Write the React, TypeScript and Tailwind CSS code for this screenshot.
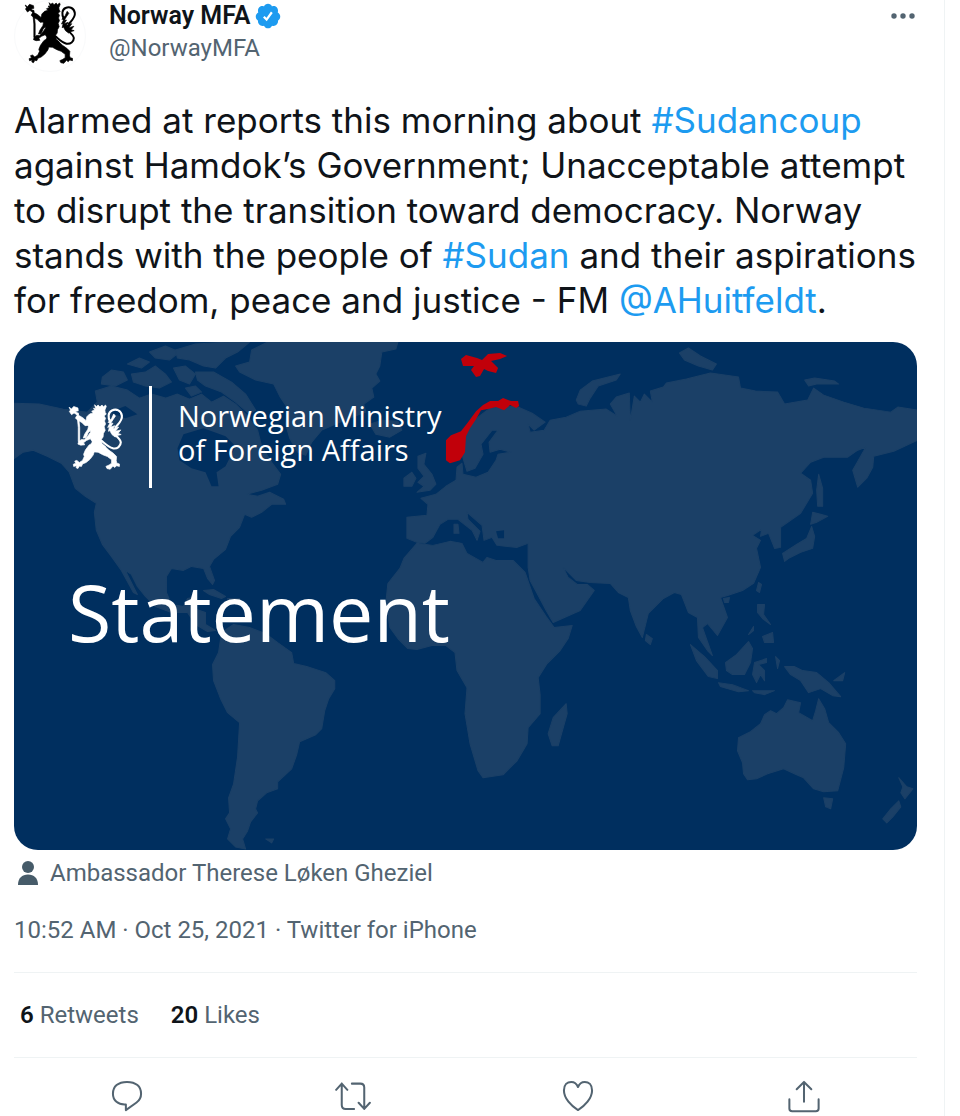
import type { ReactNode } from "react";

const LAND = [
  // North America
  "M14 403L40 404L64 409L88 412L98 402L96 391L112 386L128 390L140 398L152 394L166 398L178 394L190 399L202 394L212 402L224 396L236 404L248 416L258 430L262 446L272 462L281 474L278 484L262 490L247 494L258 496L270 492L284 499L286 504L272 504L262 512L252 517L245 514L240 527L231 536L226 549L214 559L210 566L215 580L213 584L208 578L204 568L192 566L184 570L172 568L167 576L167 592L172 604L184 606L188 598L197 596L194 608L206 612L206 624L216 630L208 631L196 624L188 612L172 612L156 606L146 596L138 586L132 574L126 570L138 594L134 592L122 570L112 556L103 544L97 530L95 512L97 503L86 496L76 488L70 472L62 463L48 456L34 450L24 452L14 459Z",
  // Arctic islands
  "M103 377L112 370L124 372L128 380L116 386L102 384Z",
  "M128 364L140 358L150 362L142 368Z",
  "M132 374L146 372L156 366L166 374L172 382L160 388L146 386L134 382Z",
  "M150 352L166 346L180 352L170 360L156 358Z",
  "M174 368L186 366L196 374L190 384L180 380Z",
  "M176 350L196 344L230 342L250 342L238 352L226 358L216 368L204 366L190 360L178 358Z",
  "M196 372L214 372L232 382L246 394L256 410L250 414L236 402L222 392L206 386L198 380Z",
  "M186 388L196 386L202 392L192 396Z",
  // Greenland and Iceland
  "M252 350L268 342L398 342L396 349L382 352L380 366L376 374L380 381L372 388L374 397L364 404L366 412L350 418L336 424L322 430L312 442L306 455L298 452L290 438L286 424L288 408L280 396L274 384L256 380L240 372L236 366L250 362Z",
  "M370 424L382 420L398 421L402 430L390 437L376 434Z",
  // Caribbean
  "M204 590L214 589L226 596L222 598L210 594Z",
  "M228 598L240 598L240 603L230 602Z",
  // South America
  "M222 632L234 624L250 627L266 633L278 642L292 652L294 663L307 666L326 672L335 680L335 688L329 698L325 710L322 728L316 734L300 741L297 754L292 768L278 781L278 788L267 792L258 800L256 808L258 812L251 821L248 830L243 838L246 848L236 846L228 838L231 828L226 818L230 812L229 797L234 783L238 756L240 722L228 712L221 698L214 680L213 664L219 652Z",
  "M266 838L274 838L272 842Z",
  // Africa
  "M417 543L404 558L400 568L388 583L386 602L390 627L398 638L408 648L417 649L432 645L446 645L455 652L457 670L467 687L465 713L470 743L478 770L483 777L503 774L517 760L527 743L528 727L540 713L540 694L538 677L547 663L560 650L568 638L572 625L554 627L546 616L534 598L525 572L513 560L496 560L487 557L483 562L467 553L462 543L450 541L433 545Z",
  "M566 703L567 713L558 745L552 745L548 733L553 717Z",
  // British Isles
  "M418 456L426 453L424 464L432 474L436 484L430 490L417 492L424 486L418 482L424 476L418 468Z",
  "M404 478L412 472L416 478L412 486L404 486Z",
  // Europe and Asia
  "M407 517L427 515L428 504L421 498L436 494L446 486L456 480L457 467L462 463L463 474L476 477L488 472L496 460L498 454L511 452L500 449L490 452L489 442L498 430L492 430L481 444L483 454L475 468L467 471L463 458L460 440L474 420L490 408L516 406L532 413L545 422L534 430L528 424L530 432L544 430L550 420L566 417L580 411L606 409L617 416L610 404L616 397L629 393L630 420L634 396L640 402L644 394L652 402L650 391L663 387L666 383L686 379L710 373L738 377L740 388L755 391L777 392L784 404L807 400L813 388L823 395L843 402L863 408L890 412L897 407L917 410L917 440L893 451L873 456L872 467L866 478L857 487L852 470L865 447L857 450L847 457L823 457L810 462L800 473L810 480L812 493L800 513L780 527L780 547L774 548L768 533L760 536L761 529L752 535L760 540L756 548L760 567L753 583L742 590L727 595L720 597L727 617L717 635L707 623L702 627L712 655L707 650L698 637L697 617L688 612L681 594L674 592L663 598L648 613L642 637L636 626L630 610L628 597L618 592L610 583L590 582L576 580L563 567L568 577L577 584L587 584L594 590L580 610L553 622L546 610L537 593L530 580L528 567L528 543L517 547L497 545L492 537L484 540L482 525L467 512L468 519L480 531L477 540L472 530L458 519L448 519L440 524L433 537L425 543L417 542L407 538Z",
  "M454 524L458 524L459 533L454 533Z",
  // Arctic Russia
  "M576 400L580 390L592 381L620 374L616 380L598 386L590 398L586 406L578 404Z",
  "M679 353L688 348L700 356L716 364L712 370L698 366L684 360Z",
  "M804 380L814 378L834 381L838 384L816 384L808 386Z",
  // Japan, Sakhalin and Taiwan
  "M818 474L822 488L822 506L817 506L816 490Z",
  "M812 512L820 514L827 516L816 522L810 524Z",
  "M811 526L814 536L812 548L800 552L788 558L784 561L782 553L796 544L806 538Z",
  "M758 582L761 584L759 592L756 590Z",
  // South-east Asia
  "M646 634L652 638L650 644L645 640Z",
  "M690 644L704 656L717 670L717 678L708 676L696 660Z",
  "M718 682L732 684L748 690L738 691L720 686Z",
  "M725 662L736 654L748 641L752 648L750 662L744 674L732 674L726 670Z",
  "M754 662L766 658L766 662L758 664L764 670L764 680L760 674L756 682L752 674Z",
  "M757 604L764 604L763 614L770 624L762 618L757 612Z",
  "M762 636L772 632L773 642L764 642Z",
  "M748 634L753 626L753 630Z",
  "M775 656L779 660L777 668Z",
  "M784 666L794 666L802 670L816 672L828 682L840 696L832 695L820 688L808 692L800 680L790 674Z",
  "M833 680L844 672L842 680Z",
  "M752 690L774 690L764 694L754 692Z",
  "M723 598L729 597L728 602L724 602Z",
  // Australia and New Zealand
  "M738 737L750 731L760 723L764 714L770 710L776 713L783 707L787 699L800 702L798 712L812 720L815 710L818 698L824 708L828 722L838 732L845 743L843 767L837 790L823 791L813 788L803 777L796 774L783 768L767 773L756 778L747 779L743 773L742 762L737 750Z",
  "M823 797L832 798L830 808L825 806Z",
  "M898 777L906 786L912 788L904 798L900 792L902 786Z",
  "M898 800L900 806L892 816L886 822L882 818L890 808Z",
];

const SEAS = [
  // Hudson Bay
  "M178 448L184 434L204 428L226 436L236 446L230 458L226 466L217 472L219 486L212 486L206 472L192 468L180 460Z",
  // Great inlets
  "M110 412L126 406L138 414L126 418Z",
  // Aegean
  "M496 531L504 530L504 538L498 538Z",
];

const LION = [
  // axe
  "M48 15L55 20L61 13L73 17L74 25L66 27L75 35L71 37L62 31L55 36L49 27L52 23Z",
  "M70 31L74 31L78 72L78 112L74 112L74 72Z",
  // crown, head and torso
  "M120 8L125 13L130 9L135 14L141 9L145 14L151 9L153 13L149 23L150 30L153 34L147 40L151 46L148 54L151 62L147 70L150 80L145 89L144 99L139 106L141 117L151 127L137 136L120 135L111 126L113 111L108 104L97 109L89 115L92 121L81 122L73 119L75 112L83 106L91 107L99 99L108 86L110 75L105 66L93 67L84 58L75 53L66 46L69 40L77 39L84 43L91 48L96 53L98 42L106 34L116 31L112 26L120 23L117 18L123 19Z",
  "M95 54L104 48L114 55L118 65L111 78L102 87L96 101L88 102L92 91L101 77L103 68Z",
  // hind legs
  "M112 117L140 120L149 125L160 136L173 145L182 154L181 166L183 173L190 175L190 182L182 180L177 185L172 181L164 190L155 188L152 182L161 178L168 173L168 163L156 154L143 149L130 142L119 141L116 150L107 162L96 171L86 175L83 182L77 181L73 188L68 186L69 180L61 182L60 176L67 173L64 167L70 165L77 171L86 165L91 154L89 148L94 136L104 122Z",
  // tail tuft
  "M174 34L179 40L172 50L165 61L172 60L165 71L177 67L172 76L188 71L179 83L194 79L186 89L195 92L184 95L178 99L169 92L163 81L159 83L162 70L157 72L164 58L158 58L168 47Z",
];

function Lion({ className }: { className: string }) {
  return (
    <svg viewBox="45 6 158 186" className={className} fill="currentColor" aria-hidden="true">
      {LION.map((d) => (
        <path key={d} d={d} stroke="currentColor" strokeWidth="2" />
      ))}
      <path
        d="M164 57C157 44 158 29 169 24C182 18 195 25 197 39C199 52 188 61 179 72M139 109C149 117 158 127 172 131C184 133 194 125 194 114C193 106 185 100 177 92"
        fill="none"
        stroke="currentColor"
        strokeWidth="6"
        strokeLinecap="round"
      />
    </svg>
  );
}

function WorldMap() {
  return (
    <svg
      viewBox="14 342 903 507"
      preserveAspectRatio="xMidYMid slice"
      className="absolute inset-0 h-full w-full"
      aria-hidden="true"
    >
      <g fill="#1b4067" stroke="#1b4067" strokeWidth="1" strokeLinejoin="round">
        {LAND.map((d) => (
          <path key={d} d={d} />
        ))}
      </g>
      <g fill="#002f5f">
        {SEAS.map((d) => (
          <path key={d} d={d} />
        ))}
      </g>
      {/* Norway and Svalbard */}
      <g fill="#c1000a">
        <path d="M461 359L466 355L477 358L482 360L488 354L500 353L507 356L500 359L491 361L498 368L496 373L488 371L484 369L480 376L476 377L471 370L474 366L463 366Z" />
        <path d="M446 440L451 435L461 431L468 422L476 411L483 405L490 401L498 401L503 398L511 401L518 401L519 406L516 408L510 405L504 410L496 407L488 409L481 410L476 419L470 428L466 436L465 452L460 460L450 463L446 460Z" />
      </g>
    </svg>
  );
}

function VerifiedBadge() {
  return (
    <svg viewBox="0 0 24 24" className="size-7" role="img" aria-label="Verified account">
      <path
        fill="#1d9bf0"
        d="M22.5 12.5c0-1.58-.875-2.95-2.148-3.6.154-.435.238-.905.238-1.4 0-2.21-1.71-3.998-3.818-3.998-.47 0-.92.084-1.336.25C14.818 2.415 13.51 1.5 12 1.5s-2.816.917-3.437 2.25c-.415-.165-.866-.25-1.336-.25-2.11 0-3.818 1.79-3.818 4 0 .494.083.964.237 1.4-1.272.65-2.147 2.018-2.147 3.6 0 1.495.782 2.798 1.942 3.486-.02.17-.032.34-.032.514 0 2.21 1.708 4 3.818 4 .47 0 .92-.086 1.335-.25.62 1.334 1.926 2.25 3.437 2.25 1.512 0 2.818-.916 3.437-2.25.415.163.865.248 1.336.248 2.11 0 3.818-1.79 3.818-4 0-.174-.012-.344-.033-.513 1.158-.687 1.943-1.99 1.943-3.484z"
      />
      <path d="M8.4 12.6l2.4 2.5 4.5-6.3" fill="none" stroke="#fff" strokeWidth="1.9" />
    </svg>
  );
}

function Action({ label, children }: { label: string; children: ReactNode }) {
  return (
    <button type="button" aria-label={label} className="flex justify-center py-1">
      <svg
        viewBox="0 0 32 32"
        className="size-9"
        fill="none"
        stroke="#536471"
        strokeWidth="1.8"
        strokeLinecap="round"
        strokeLinejoin="round"
      >
        {children}
      </svg>
    </button>
  );
}

function Tag({ children }: { children: string }) {
  return (
    <a href="#" className="text-[#1d9bf0]">
      {children}
    </a>
  );
}

export default function App() {
  return (
    <main className="mr-[15px] overflow-hidden border-r border-[#eff3f4] bg-white pr-[27px] pl-[14px] font-[Roboto,sans-serif] text-[#0f1419]">
      <article>
        <header className="flex items-start">
          <div className="flex size-18 items-start justify-center rounded-full border border-gray-50 pt-px">
            <Lion className="h-[62px] w-[53px] text-black" />
          </div>
          <div className="ml-[23px] text-2xl leading-8">
            <div className="flex items-center gap-1">
              <h1 className="text-[25px] font-semibold">Norway MFA</h1>
              <VerifiedBadge />
            </div>
            <p className="text-[#536471]">@NorwayMFA</p>
          </div>
          <button type="button" aria-label="More" className="ml-auto h-8">
            <svg viewBox="0 0 28 8" className="w-7" fill="#536471">
              <circle cx="5" cy="4" r="2.700" />
              <circle cx="14" cy="4" r="2.700" />
              <circle cx="23" cy="4" r="2.700" />
            </svg>
          </button>
        </header>

        <p className="mt-[26px] font-[Inter,sans-serif] text-[35px] leading-[45px] whitespace-nowrap">
          Alarmed at reports this morning about <Tag>#Sudancoup</Tag>
          <br />
          against Hamdok’s Government; Unacceptable attempt
          <br />
          to disrupt the transition toward democracy. Norway
          <br />
          stands with the people of <Tag>#Sudan</Tag> and their aspirations
          <br />
          for freedom, peace and justice - FM <Tag>@AHuitfeldt</Tag>.
        </p>

        <section className="relative mt-[19px] aspect-video overflow-hidden rounded-3xl bg-[#002f5f] font-['Open_Sans',sans-serif] text-white">
          <WorldMap />
          <div className="relative px-[54px] pt-11">
            <div className="flex items-center">
              <Lion className="h-[68px] w-[56px]" />
              <div className="ml-[25px] h-[102px] w-[3px] bg-white" />
              <p className="ml-[26px] pb-2 text-[29px] leading-[34px]">
                Norwegian Ministry
                <br />
                of Foreign Affairs
              </p>
            </div>
            <h2 className="mt-[76px] text-[79px] leading-[96px]">Statement</h2>
          </div>
        </section>

        <p className="mt-[7px] flex items-center text-2xl leading-8 text-[#536471]">
          <svg viewBox="0 0 28 28" className="mr-2 size-7" fill="#465b69" aria-hidden="true">
            <circle cx="14" cy="8" r="6" />
            <path d="M4 26C4 19 8 15.500 14 15.500S24 19 24 26Z" />
          </svg>
          Ambassador Therese Løken Gheziel
        </p>

        <p className="mt-[25px] text-2xl leading-8 text-[#536471]">
          10:52 AM · Oct 25, 2021 · Twitter for iPhone
        </p>

        <div className="mt-[26px] flex gap-8 border-y border-[#eff3f4] px-1.5 py-[26px] text-2xl leading-8 text-[#536471]">
          <a href="#">
            <b className="font-semibold text-[#0f1419]">6</b> Retweets
          </a>
          <a href="#">
            <b className="font-semibold text-[#0f1419]">20</b> Likes
          </a>
        </div>

        <div className="grid grid-cols-4 pt-4">
          <Action label="Reply">
            <path d="M15 28.500V23.500C8 24 3.500 20 3.500 14C3.500 7.500 8 3.500 16 3.500S28.500 7.500 28.500 14C28.500 17.500 27 20 24.500 21.800Z" />
          </Action>
          <Action label="Retweet">
            <path d="M1 10.500L6 5L11 10.500M6 5V24C6 26.500 7 27.500 9.500 27.500H17M15 5H22.500C25 5 26 6 26 8.500V27.500M21 22L26 27.500L31 22" />
          </Action>
          <Action label="Like">
            <path d="M16 28.500C10 25 3.500 18 3.500 11C3.500 6 6.500 3.500 10 3.500C13 3.500 15 5.500 16 8C17 5.500 19 3.500 22 3.500C25.500 3.500 28.500 6 28.500 11C28.500 18 22 25 16 28.500Z" />
          </Action>
          <Action label="Share">
            <path d="M16 21V3.500M9.500 10L16 3.500L22.500 10M3 19V27C3 28.500 4 29.500 5.500 29.500H26.500C28 29.500 29 28.500 29 27V19" />
          </Action>
        </div>
      </article>
    </main>
  );
}
